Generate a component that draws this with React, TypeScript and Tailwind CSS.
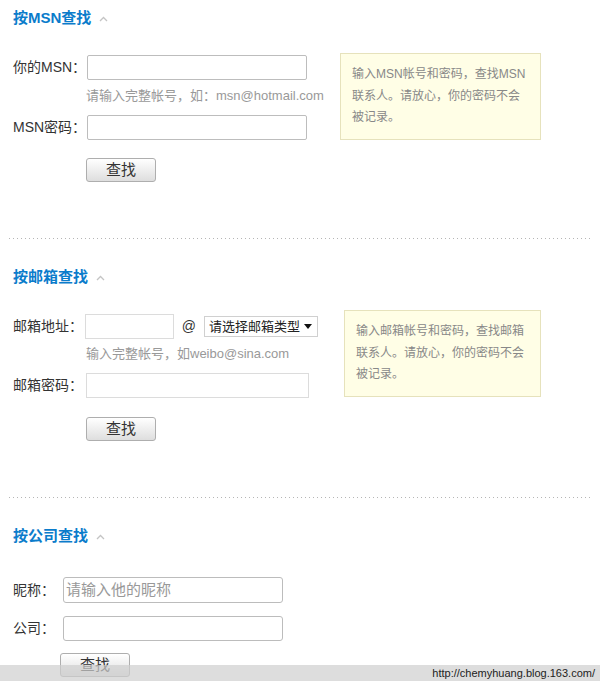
import React from "react";

const font = "font-['Liberation_Sans','Noto_Sans_CJK_SC',sans-serif]";

function Chevron() {
  return (
    <svg width="9" height="6" viewBox="0 0 9 6" className="ml-[8px] mt-[1px]">
      <polyline points="1,5 4.5,1.5 8,5" fill="none" stroke="#c4c4c4" strokeWidth="1.3" />
    </svg>
  );
}

function Title({ text }: { text: string }) {
  return (
    <div className="flex h-[20px] items-center">
      <span className="text-[15px] font-bold text-[#0b7ccb]">{text}</span>
      <Chevron />
    </div>
  );
}

function Button({ className = "" }: { className?: string }) {
  return (
    <button
      className={`flex h-[24px] w-[70px] items-center justify-center rounded-[3px] border border-[#aeaeae] bg-gradient-to-b from-[#ffffff] to-[#dedede] text-[15px] text-[#333] ${className}`}
    >
      查找
    </button>
  );
}

function Separator() {
  return (
    <div className="ml-[-4px] h-px w-[581px] bg-[linear-gradient(to_right,#b5b5b5_1px,transparent_1px)] bg-[length:4px_1px] bg-repeat-x" />
  );
}

function InfoBox({ lines, className = "" }: { lines: string[]; className?: string }) {
  return (
    <div
      className={`border border-[#e6e2bc] bg-[#fffee6] pl-[11px] pr-[6px] py-[10px] text-[12px] leading-[21.5px] text-[#888] ${className}`}
    >
      {lines.map((l) => (
        <div key={l} className="whitespace-nowrap">
          {l}
        </div>
      ))}
    </div>
  );
}

export default function App() {
  return (
    <div className={`relative h-[681px] w-[600px] overflow-hidden bg-white ${font}`}>
      <div className="pl-[13px] pt-[8px]">
        {/* MSN */}
        <Title text="按MSN查找" />
        <div className="mt-[25px] flex items-start">
          <div className="w-[294px] shrink-0 pt-[2px]">
            <div className="flex h-[25px] items-center">
              <span className="w-[74px] text-[14px] text-[#333]">你的MSN：</span>
              <div className="h-[25px] w-[220px] rounded-[2px] border border-[#bdbdbd]" />
            </div>
            <div className="ml-[73px] mt-[7px] h-[18px] whitespace-nowrap text-[13px] leading-[18px] text-[#999]">
              请输入完整帐号，如：msn@hotmail.com
            </div>
            <div className="mt-[10px] flex h-[25px] items-center">
              <span className="w-[74px] text-[14px] text-[#333]">MSN密码：</span>
              <div className="h-[25px] w-[220px] rounded-[2px] border border-[#bdbdbd]" />
            </div>
            <Button className="ml-[73px] mt-[18px]" />
          </div>
          <InfoBox
            className="ml-[33px] w-[201px]"
            lines={["输入MSN帐号和密码，查找MSN", "联系人。请放心，你的密码不会", "被记录。"]}
          />
        </div>
        <div className="mt-[56px]">
          <Separator />
        </div>

        {/* Email */}
        <div className="mt-[28px]">
          <Title text="按邮箱查找" />
        </div>
        <div className="mt-[25px] flex items-start">
          <div className="w-[305px] shrink-0 pt-[2px]">
            <div className="flex h-[25px] items-center">
              <span className="w-[73px] text-[14px] text-[#333]">邮箱地址：</span>
              <div className="h-[25px] w-[89px] border border-[#dcdcdc]" />
              <span className="ml-[8px] text-[14px] text-[#333]">@</span>
              <div className="ml-[8px] flex h-[21px] w-[115px] items-center justify-between border border-[#d0d0d0] pl-[4px] pr-[5px] text-[13px] text-[#222]">
                <span className="whitespace-nowrap">请选择邮箱类型</span>
                <svg width="8" height="5" viewBox="0 0 8 5">
                  <polygon points="0,0 8,0 4,5" fill="#111" />
                </svg>
              </div>
            </div>
            <div className="ml-[73px] mt-[6px] h-[18px] whitespace-nowrap text-[13px] leading-[18px] text-[#999]">
              输入完整帐号，如weibo@sina.com
            </div>
            <div className="mt-[10px] flex h-[25px] items-center">
              <span className="w-[73px] text-[14px] text-[#333]">邮箱密码：</span>
              <div className="h-[25px] w-[223px] border border-[#dcdcdc]" />
            </div>
            <Button className="ml-[73px] mt-[19px]" />
          </div>
          <InfoBox
            className="ml-[26px] mt-[-2px] w-[197px]"
            lines={["输入邮箱帐号和密码，查找邮箱", "联系人。请放心，你的密码不会", "被记录。"]}
          />
        </div>
        <div className="mt-[56px]">
          <Separator />
        </div>

        {/* Company */}
        <div className="mt-[28px]">
          <Title text="按公司查找" />
        </div>
        <div className="mt-[31px] flex h-[26px] items-center">
          <span className="w-[50px] text-[14px] text-[#333]">昵称：</span>
          <div className="flex h-[26px] w-[220px] items-center rounded-[3px] border border-[#bcbcbc] pl-[2px] text-[15px] text-[#999]">
            请输入他的昵称
          </div>
        </div>
        <div className="mt-[13px] flex h-[25px] items-center">
          <span className="w-[50px] text-[14px] text-[#333]">公司：</span>
          <div className="h-[25px] w-[220px] rounded-[3px] border border-[#bcbcbc]" />
        </div>
        <Button className="ml-[47px] mt-[12px]" />
      </div>

      <div className="absolute inset-x-0 bottom-0 flex h-[16px] items-center justify-end bg-[#cfcfcf]/70 pr-[5px] text-[11px] text-[#222]">
        http://chemyhuang.blog.163.com/
      </div>
    </div>
  );
}
